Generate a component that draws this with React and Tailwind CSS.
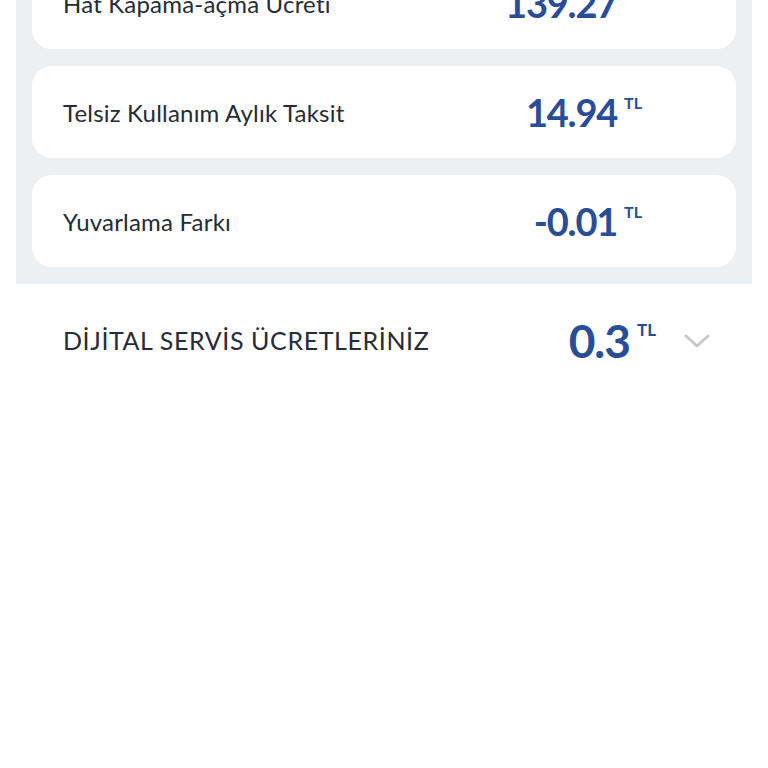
import React from 'react';

const items = [
  { label: 'Hat Kapama-açma Ücreti', value: '139.27' },
  { label: 'Telsiz Kullanım Aylık Taksit', value: '14.94' },
  { label: 'Yuvarlama Farkı', value: '-0.01' },
];

const font = { fontFamily: 'Lato, "Noto Sans", sans-serif' };

const Row = ({ item, first }) => (
  <div
    className={`flex items-center justify-between bg-white rounded-[20px] h-[92px] pl-[31px] pr-[94px] ${first ? '-mt-[43px]' : ''}`}
  >
    <span className="text-[24px] text-[#262b36] tracking-[0.2px] pt-[2px]">{item.label}</span>
    <span className="flex items-start text-[#2a4d98]">
      <span className="text-[38px] font-bold leading-none tracking-[-1.2px]">{item.value}</span>
      <span className="text-[16px] font-bold leading-none ml-[7px] mt-[2px]">TL</span>
    </span>
  </div>
);

export default function App() {
  return (
    <div className="w-[768px] h-[768px] bg-white overflow-hidden" style={font}>
      <div className="mx-4 bg-[#edf0f3] px-4 pb-[17px] flex flex-col gap-[17px]">
        {items.map((item, i) => (
          <Row key={item.label} item={item} first={i === 0} />
        ))}
      </div>
      <div className="flex items-center justify-between pl-[63px] pr-[58px] h-[114px]">
        <span className="text-[25px] text-[#262b36] tracking-[0.6px]">DİJİTAL SERVİS ÜCRETLERİNİZ</span>
        <div className="flex items-center">
          <span className="flex items-start text-[#2a4d98]">
            <span className="text-[46px] font-bold leading-none tracking-[-1px]">0.3</span>
            <span className="text-[17px] font-bold leading-none ml-[7px] mt-[3px]">TL</span>
          </span>
          <svg width="26" height="16" viewBox="0 0 26 16" className="ml-[28px]">
            <path d="M2 3l11 10L24 3" fill="none" stroke="#c8c8c8" strokeWidth="3" strokeLinecap="round" strokeLinejoin="round" />
          </svg>
        </div>
      </div>
    </div>
  );
}
